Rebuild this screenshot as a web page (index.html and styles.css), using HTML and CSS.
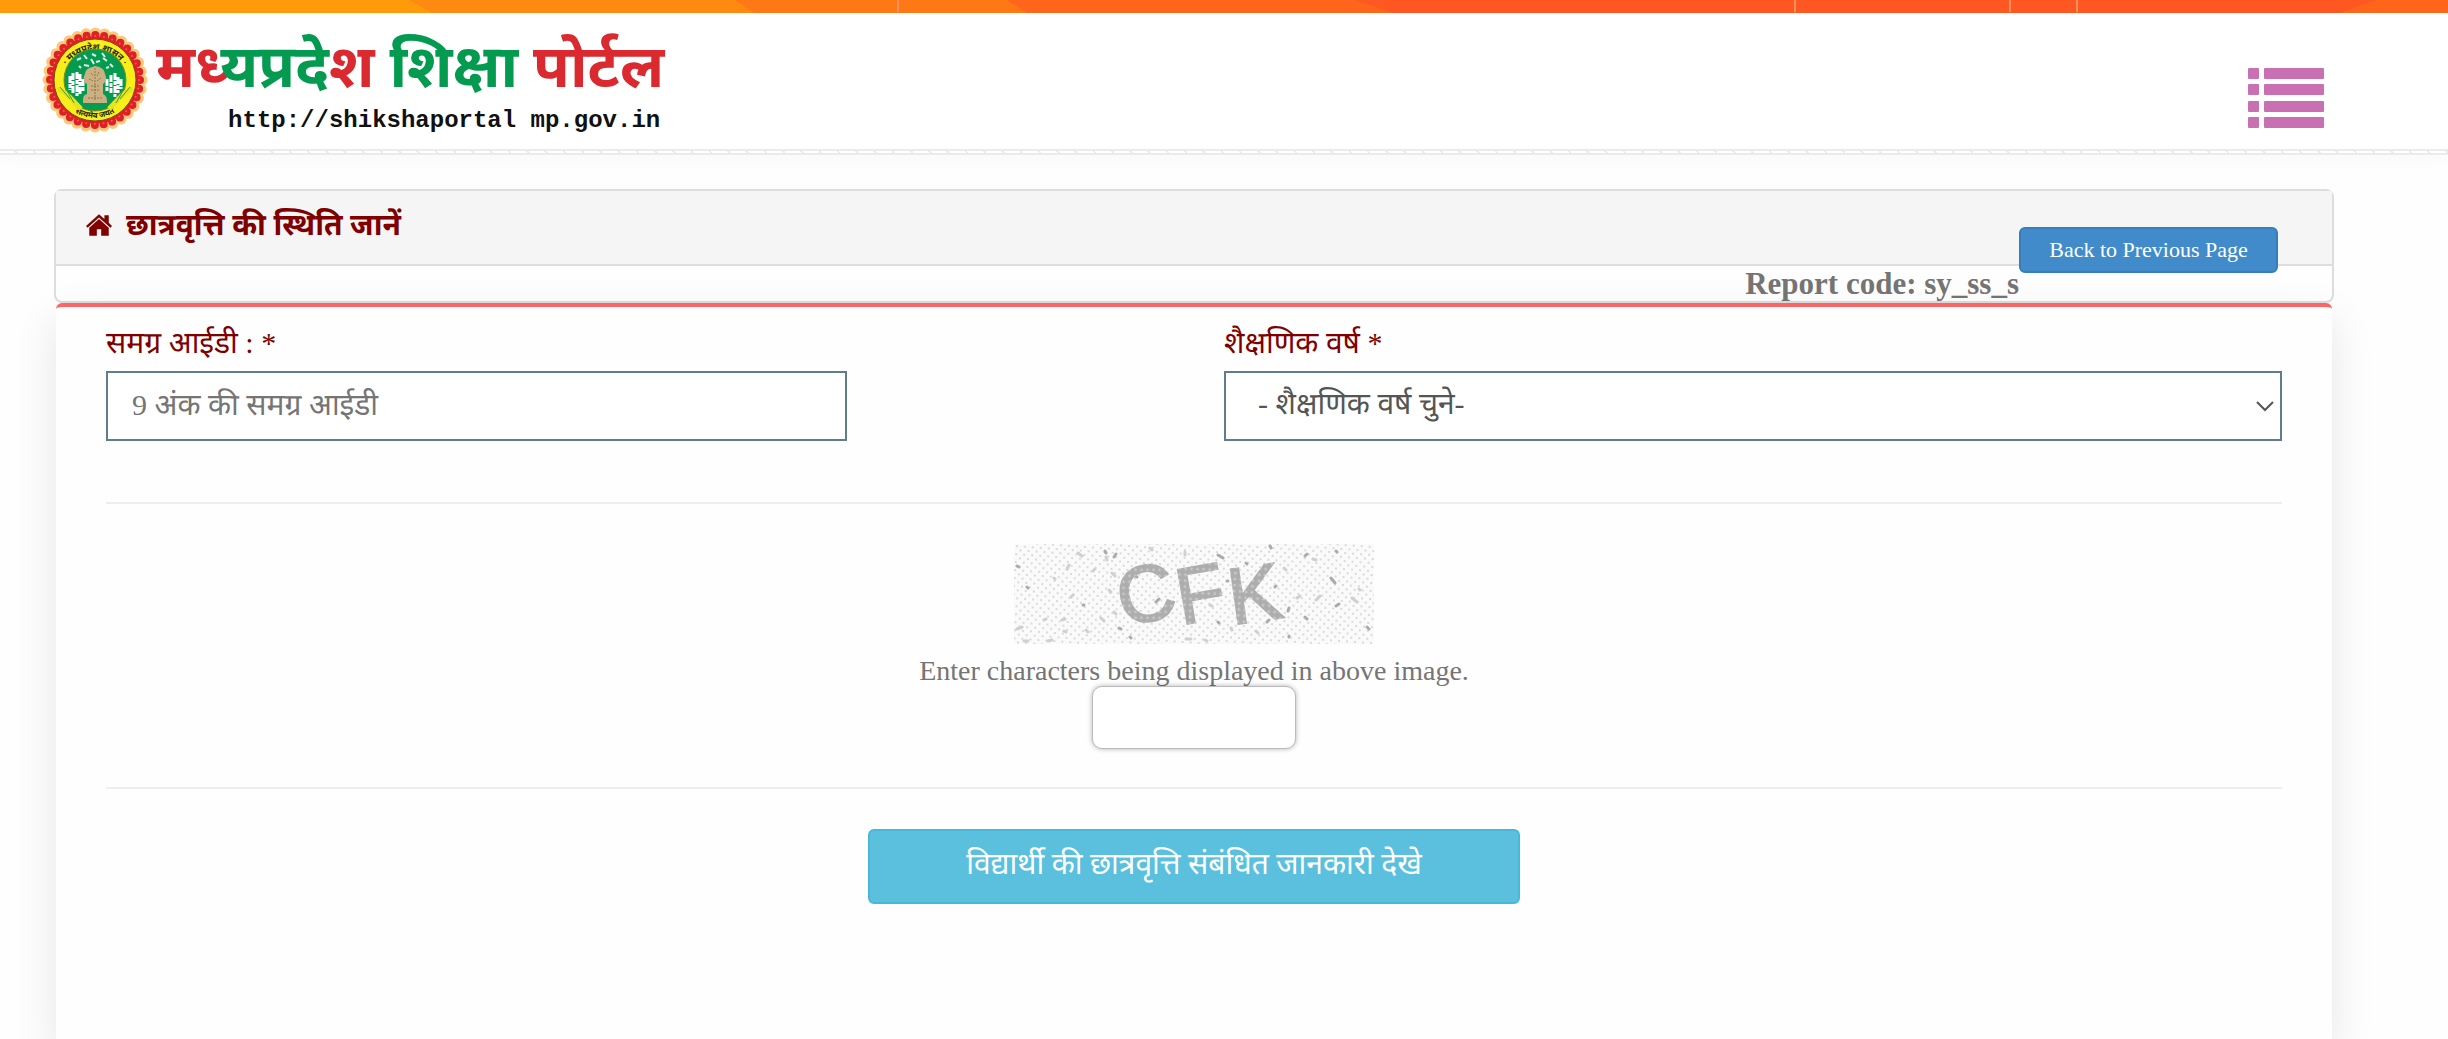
FILE: index.html
```html
<!DOCTYPE html>
<html lang="hi">
<head>
    <meta charset="UTF-8">
    <meta name="viewport" content="width=device-width, initial-scale=1.0">
    <title>मध्यप्रदेश शिक्षा पोर्टल</title>
    <link rel="stylesheet" href="styles.css">
</head>
<body>
    <!-- Top strip -->
    <svg class="top-strip" viewBox="0 0 2448 13" preserveAspectRatio="none" aria-hidden="true">
        <rect width="2448" height="13" fill="#ff9b0b"/>
        <path d="M409 0H2448V13H432z" fill="#ff8a12"/>
        <path d="M735 0H2448V13H754z" fill="#ff7816"/>
        <path d="M1007 0H2448V13H1027z" fill="#ff661b"/>
        <path d="M1355 0H2376L2340 13H1393z" fill="#ff5722"/>
        <path d="M898 0V12M1795 0V12M2010 0V12M2077 0V12" stroke="#ff8f5c" stroke-width="2"/>
    </svg>

    <header class="header">
        <a href="#" class="logo">
            <svg class="seal" viewBox="0 0 106 106" aria-hidden="true">
                <circle cx="53" cy="53" r="47" fill="none" stroke="#fbc97a" stroke-width="11" stroke-linecap="round" stroke-dasharray="0 9.228"/>
                <circle cx="53" cy="53" r="44" fill="#e01f26"/>
                <circle cx="53" cy="53" r="45" fill="none" stroke="#e01f26" stroke-width="8" stroke-linecap="round" stroke-dasharray="0 8.836"/>
                <circle cx="53" cy="53" r="44" fill="none" stroke="#f0603c" stroke-width="2" stroke-linecap="round" stroke-dasharray="0 8.639"/>
                <circle cx="53" cy="53" r="41" fill="#f7ee1c" stroke="#7c4a16" stroke-width="1"/>
                <path id="ringTop" d="M19 57A34 34 0 1 1 87 57" fill="none"/>
                <path id="ringBottom" d="M15 53A38 38 0 0 0 91 53" fill="none"/>
                <g font-size="9" font-weight="bold" fill="#26280c">
                    <text><textPath href="#ringTop" startOffset="50%" text-anchor="middle">· मध्यप्रदेश शासन ·</textPath></text>
                    <text font-size="8"><textPath href="#ringBottom" startOffset="50%" text-anchor="middle">सत्यमेव जयते</textPath></text>
                </g>
                <circle cx="53" cy="53" r="31" fill="#049b51" stroke="#7d8a1b" stroke-width="1"/>
                <path d="M15 62c9 2 14 10 24 20M91 62c-9 2-14 10-24 20" fill="none" stroke="#e6e31f" stroke-width="5"/>
                <path d="M18 60l10 12M24 62l8 14M88 60l-10 12M82 62l-8 14" stroke="#3f9a2f" stroke-width="1"/>
                <path d="M28 49v14M31 46v20M35 45v24M38 47v20M41 52v12M65 52v12M69 48v18M73 46v24M76 50v16M79 52v10" stroke="#fff" stroke-width="3" stroke-dasharray="7 1 4 1"/>
                <path d="M35 33l4-2M42 28l3 4M50 27l4 2M61 31l4 3M42 38l5 1M60 26l3 4M68 37l3 3M54 35l4-1M49 32l3 5M37 39l2 2M64 41l3-1" stroke="#dff3e4" stroke-width="2"/>
                <path d="M43 47c1-6 5-6 10-8c5 1 9 2 10 8c2 4 1 8-2 10v10c4 2 4 5 4 9H41c0-5 0-8 4-9V57c-4-2-4-6-2-10z" fill="#cbb083"/>
                <path d="M49 46l2 3M57 45l-2 4M47 52l4 2M59 51l-4 3M49 59h8M49 63h8M46 71h14M53 41v33" stroke="#8d7446" stroke-width="1" stroke-dasharray="2 1"/>
            </svg>
            <span class="logo-text">
                <span class="logo-name"><span class="red">मध्</span><span class="green">यप्रदे</span><span class="red">श</span> <span class="green">शिक्षा</span> <span class="red">पोर्टल</span></span>
                <span class="logo-url">http://shikshaportal mp.gov.in</span>
            </span>
        </a>
        <button type="button" class="menu-btn" aria-label="Menu">
            <svg viewBox="0 0 76 60" aria-hidden="true">
                <g fill="#c970b2">
                    <rect width="11" height="11" rx="1"/><rect x="16" width="60" height="11" rx="1"/>
                    <rect y="16" width="11" height="11" rx="1"/><rect x="16" y="16" width="60" height="11" rx="1"/>
                    <rect y="33" width="11" height="11" rx="1"/><rect x="16" y="33" width="60" height="11" rx="1"/>
                    <rect y="49" width="11" height="11" rx="1"/><rect x="16" y="49" width="60" height="11" rx="1"/>
                </g>
            </svg>
        </button>
    </header>
    <div class="header-line"></div>

    <main class="content">
        <div class="panel">
            <div class="panel-heading">
                <h1>
                    <svg class="home-icon" viewBox="0 0 24 20" aria-hidden="true">
                        <path d="M0 11L12 0l5 4.500V1h4v7l3 3-1.500 1.500L12 3 1.500 12.500z" fill="#800000"/>
                        <path d="M12 4.500l9 8V20h-7v-6h-4v6H3v-7.500z" fill="#800000"/>
                    </svg>
                    छात्रवृत्ति की स्थिति जानें
                </h1>
            </div>
            <div class="panel-body">
                <b class="report-code">Report code: sy_ss_s</b>
                <button type="button" class="btn btn-primary">Back to Previous Page</button>
            </div>
        </div>

        <form class="card">
            <div class="fields">
                <div class="form-group">
                    <label for="samagraId">समग्र आईडी : *</label>
                    <input type="text" id="samagraId" name="samagraId" placeholder="9 अंक की समग्र आईडी">
                </div>
                <div class="form-group">
                    <label for="year">शैक्षणिक वर्ष *</label>
                    <div class="select-box">
                        <select id="year" name="year">
                            <option value="">- शैक्षणिक वर्ष चुने-</option>
                        </select>
                        <svg class="arrow" viewBox="0 0 18 12" aria-hidden="true"><path d="M1 2l8 8 8-8" fill="none" stroke="#555" stroke-width="2"/></svg>
                    </div>
                </div>
            </div>
            <hr>
            <div class="captcha">
                <svg class="captcha-img" viewBox="0 0 360 100" role="img" aria-label="Captcha">
                    <defs>
                        <pattern id="dots" width="16" height="8" patternUnits="userSpaceOnUse" patternTransform="rotate(4)">
                            <rect width="16" height="8" fill="#fafafa"/>
                            <path d="M2 1h2v2H2zM10 1h2v2h-2zM6 5h2v2H6zM14 5h2v2h-2z" fill="#dadada"/>
                        </pattern>
                        <pattern id="weave" width="6" height="6" patternUnits="userSpaceOnUse" patternTransform="rotate(12)">
                            <rect width="6" height="6" fill="#adadad"/>
                            <circle cx="3" cy="3" r="1.500" fill="#c8c8c8"/>
                        </pattern>
                    </defs>
                    <rect width="360" height="100" fill="url(#dots)"/>
                    <g stroke="#d0d0d0" stroke-width="3" stroke-linecap="round">
                        <path d="M64 9l4 3M55 21l-2 4M40 34l1 1M59 51l-2 2M48 76l3-1M3 85l5-2M50 87l2 1M72 86l2 2M95 46l2 2M98 29l3 3M79 27l2-2M92 13l1 3M136 4l2 2M171 8v3M172 95h5M191 96l2 1M242 87l2 2M283 54l3-2M302 56l4-4M338 54l5 4M10 97h4M34 97l4-1M217 84l1 2M196 61l2 1M87 74l3 3M100 68l2 2M30 76l2-1M345 45l1 1M270 24l2 2M299 15l3 1"/>
                    </g>
                    <g stroke="#ababab" stroke-width="3" stroke-linecap="round">
                        <path d="M91 7l1 2M100 13l2-3M3 22l2 1M13 43l1 1M69 61h1M105 84l2 1M116 93l1 1M204 11l5 3M256 2l1 2M291 12l2-2M322 7l1 1M317 34l4 5M322 62l3-2M291 73l2 2M353 83l2 2M275 64l-1 3M253 78l2-2M275 92v1M213 37h1M232 19l1 1M261 43l1-1M204 78l1 1M142 58l3-3M121 32l2 1"/>
                    </g>
                    <g font-family="'Liberation Sans', sans-serif" font-size="80" fill="url(#weave)" stroke="url(#weave)" stroke-width="2">
                        <text x="103" y="77" transform="rotate(-12 133 50)">C</text>
                        <text x="162" y="77" transform="rotate(-10 188 50)">F</text>
                        <text x="214" y="77" transform="rotate(-8 243 50)">K</text>
                    </g>
                </svg>
                <label for="captchaText">Enter characters being displayed in above image.</label>
                <input type="text" id="captchaText" name="captchaText">
            </div>
            <hr>
            <div class="submit-row">
                <button type="submit" class="btn btn-info">विद्यार्थी की छात्रवृत्ति संबंधित जानकारी देखे</button>
            </div>
        </form>
    </main>
</body>
</html>
```

FILE: styles.css
```css
* {
    box-sizing: border-box;
}
body {
    margin: 0;
    min-height: 100vh;
    display: flex;
    flex-direction: column;
    overflow: hidden;
    font-family: "Liberation Serif", "Noto Sans Devanagari", "Noto Sans", serif;
    font-size: 28px;
    color: #757575;
    background-color: #fefefe;
}
.top-strip {
    display: block;
    width: 100%;
    height: 13px;
}

/* Header */
.header {
    display: flex;
    justify-content: space-between;
    align-items: flex-start;
    height: 136px;
    padding: 14px 124px 0 42px;
    background-color: #fff;
}
.header-line {
    height: 6px;
    border-top: 2px solid #ebebeb;
    border-bottom: 2px solid #ebebeb;
    background: repeating-linear-gradient(50deg, #fff 0, #fff 12px, #ebebeb 12px, #ebebeb 14px);
    box-shadow: 0 4px 14px rgba(0, 0, 0, 0.04);
}
.logo {
    display: flex;
    gap: 8px;
    text-decoration: none;
}
.seal {
    width: 106px;
    height: 106px;
}
.logo-text {
    display: flex;
    flex-direction: column;
    align-items: flex-end;
}
.logo-name {
    font-size: 60px;
    font-weight: bold;
    line-height: 80px;
}
.logo-url {
    padding-right: 4px;
    font-family: "Liberation Mono", monospace;
    font-size: 24px;
    font-weight: bold;
    line-height: 28px;
    color: #111;
}
.red {
    color: #da2a2f;
}
.green {
    color: #049b51;
}
.menu-btn {
    width: 76px;
    height: 60px;
    margin-top: 41px;
    padding: 0;
    border: none;
    background: none;
    cursor: pointer;
}
.menu-btn svg {
    display: block;
}

/* Panel */
.content {
    flex: 1;
    display: flex;
    flex-direction: column;
    padding: 34px 114px 0 54px;
}
.panel {
    border: 2px solid #ddd;
    border-radius: 8px;
}
.panel-heading {
    height: 75px;
    padding: 14px 30px;
    border-bottom: 2px solid #ddd;
    background-color: #f5f5f5;
}
h1 {
    display: flex;
    align-items: center;
    gap: 14px;
    margin: 0;
    font-size: 30px;
    line-height: 40px;
    color: #800000;
}
.home-icon {
    width: 26px;
    height: 22px;
}
.panel-body {
    display: flex;
    justify-content: flex-end;
    height: 35px;
    padding-right: 54px;
}
.report-code {
    font-size: 31px;
    line-height: 36px;
}
.btn {
    border-radius: 6px;
    font-family: inherit;
    color: #fff;
    cursor: pointer;
}
.btn-primary {
    width: 259px;
    height: 46px;
    margin-top: -39px;
    border: 2px solid #357ebd;
    background-color: #428bca;
    font-size: 22px;
}

/* Form */
.card {
    flex: 1;
    margin: 0 2px;
    padding: 16px 50px;
    border-top: 4px solid #ff6464;
    border-radius: 6px 6px 0 0;
    background-color: #fefefe;
    box-shadow: 0 16px 44px rgba(0, 0, 0, 0.1);
}
.fields {
    display: grid;
    grid-template-columns: 741fr 1058fr;
    gap: 377px;
}
label {
    display: block;
}
.form-group label {
    font-size: 30px;
    line-height: 40px;
    margin-bottom: 8px;
    color: #800000;
}
.form-group input, select {
    width: 100%;
    height: 70px;
    border: 2px solid #607d8b;
    background-color: #fff;
    font-family: inherit;
    font-size: 30px;
    color: #555;
}
.form-group input {
    padding: 0 24px 2px;
}
input::placeholder {
    color: #757575;
}
.select-box {
    position: relative;
}
select {
    display: block;
    padding: 0 32px 4px;
    line-height: 50px;
    appearance: none;
}
.arrow {
    position: absolute;
    right: 8px;
    top: 29px;
    width: 18px;
    height: 12px;
    pointer-events: none;
}
hr {
    height: 2px;
    margin: 61px 0 40px;
    border: none;
    background-color: #eee;
}
.captcha {
    display: flex;
    flex-direction: column;
    align-items: center;
}
.captcha-img {
    width: 360px;
    height: 100px;
    margin-bottom: 12px;
}
.captcha label {
    line-height: 30px;
}
.captcha input {
    width: 204px;
    height: 63px;
    padding: 8px 16px;
    border: 1px solid #bbb;
    border-radius: 10px;
    box-shadow: 0 0 5px rgba(0, 0, 0, 0.3);
    background-color: #fff;
    font-size: 28px;
}
.captcha + hr {
    margin-top: 38px;
}
.submit-row {
    text-align: center;
}
.btn-info {
    width: 652px;
    height: 75px;
    border: 2px solid #46b8da;
    background-color: #5bc0de;
    font-size: 30px;
}
```
